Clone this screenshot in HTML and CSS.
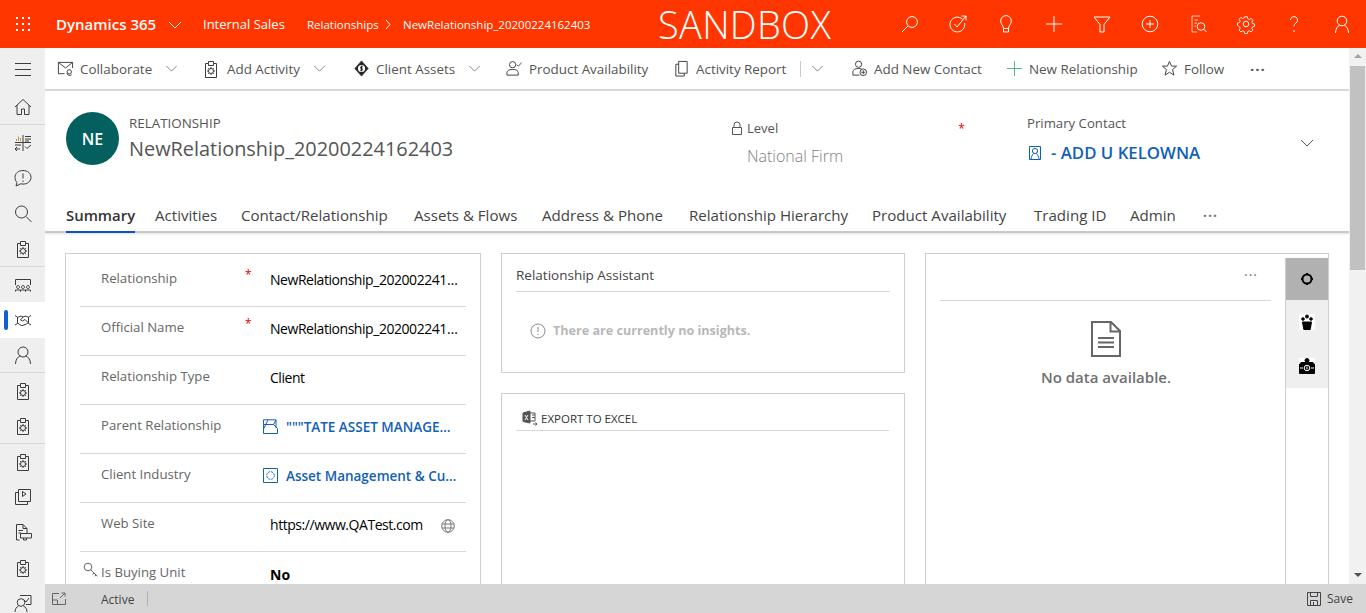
FILE: index.html
```html
<!DOCTYPE html>
<html lang="en">
<head>
    <meta charset="UTF-8">
    <meta name="viewport" content="width=device-width, initial-scale=1.0">
    <title>NewRelationship_20200224162403</title>
    <link rel="stylesheet" href="styles.css">
</head>
<body>
    <!-- Shared icon shapes -->
    <svg class="defs" width="0" height="0">
        <symbol id="clip" viewBox="0 0 20 20">
            <path d="M4.500 4.500h3v-2h5v2h3v14h-11z M7.500 4.500v2h5v-2"/>
            <circle cx="10" cy="12" r="2.500"/>
            <path d="M10 8v1.500M10 14.500V16M6 12h1.500M12.500 12H14M7.200 9.200l1 1M12.800 14.800l-1-1M12.800 9.200l-1 1M7.200 14.800l1-1"/>
        </symbol>
        <symbol id="chev" viewBox="0 0 14 8">
            <path d="M1 1l6 6 6-6"/>
        </symbol>
    </svg>

    <header class="topbar">
        <svg class="waffle" viewBox="0 0 14 14">
            <g fill="#fff">
                <rect x="0" y="0" width="2" height="2"/><rect x="6" y="0" width="2" height="2"/><rect x="12" y="0" width="2" height="2"/>
                <rect x="0" y="6" width="2" height="2"/><rect x="6" y="6" width="2" height="2"/><rect x="12" y="6" width="2" height="2"/>
                <rect x="0" y="12" width="2" height="2"/><rect x="6" y="12" width="2" height="2"/><rect x="12" y="12" width="2" height="2"/>
            </g>
        </svg>
        <span class="brand">Dynamics 365</span>
        <svg class="brand-chev"><use href="#chev"/></svg>
        <span class="app-name">Internal Sales</span>
        <span class="crumb">Relationships</span>
        <svg class="crumb-sep" viewBox="0 0 6 11"><path d="M1 1l4 4.500L1 10"/></svg>
        <span class="crumb crumb-last">NewRelationship_20200224162403</span>
        <span class="sandbox">SANDBOX</span>
        <div class="top-icons">
            <svg viewBox="0 0 20 20"><circle cx="12" cy="8" r="5.400"/><path d="M8 12l-6 6"/></svg>
            <svg viewBox="0 0 20 20"><path d="M14.500 5.200A7.400 7.400 0 1 0 16.600 9"/><path d="M6.500 10l2.500 3 9-11M13.500 2H18v4.500"/></svg>
            <svg viewBox="0 0 20 20"><path d="M7.500 14.500c0-3-2.800-4-2.800-7.600a5.300 5.300 0 0 1 10.600 0c0 3.600-2.800 4.600-2.800 7.600z M7.500 14.500V18h5v-3.500"/></svg>
            <svg viewBox="0 0 20 20"><path d="M10 2v16M2 10h16"/></svg>
            <svg viewBox="0 0 20 20"><path d="M2 3h16l-6 7.500V18H8v-7.500z"/></svg>
            <svg viewBox="0 0 20 20"><circle cx="10" cy="10" r="7.800"/><path d="M10 6v8M6 10h8"/></svg>
            <svg viewBox="0 0 20 20"><path class="faint" d="M12 2H4v16h5 M6.500 6H10M6.500 9H9M6.500 12H8"/><circle cx="13" cy="12.500" r="3.800"/><path d="M15.800 15.300L18.500 18"/></svg>
            <svg viewBox="0 0 20 20"><circle cx="10" cy="10" r="2.800"/><path d="M8.500 2h3l.5 2.300 1.700.7 2-1.200 2 2.100-1.200 2 .7 1.600 2.300.5v2.600l-2.300.5-.7 1.700 1.200 2-2 2-2-1.200-1.700.7-.5 2.300h-3l-.5-2.300-1.700-.7-2 1.200-2-2 1.200-2-.7-1.700L.5 11.500V8.900l2.300-.5.700-1.600-1.200-2 2-2.100 2 1.200 1.700-.7z" transform="translate(1 1) scale(.9)"/></svg>
            <svg viewBox="0 0 20 20"><path d="M6.500 6a3.500 3.500 0 1 1 5.500 3c-1.500 1-2 1.800-2 3.500M10 16v2"/></svg>
            <svg viewBox="0 0 20 20"><circle cx="10" cy="7" r="4.800"/><path d="M3.500 19c0-4 2.200-7 4-7.800M16.500 19c0-4-2.200-7-4-7.800"/></svg>
        </div>
    </header>

    <div class="shell">
        <nav class="sidebar">
            <div class="side-item side-burger">
                <svg viewBox="0 0 20 20"><path d="M2 4.500h16M2 10.500h16M2 16.500h16"/></svg>
            </div>
            <div class="side-item side-end">
                <svg viewBox="0 0 20 20"><path d="M2 10l8-7.500 8 7.500M4 8v9.500h4.500V12h3v5.500H16V8"/></svg>
            </div>
            <div class="side-item">
                <svg viewBox="0 0 20 20"><path class="warm" d="M3.500 8V6M5.500 8V3.500M7.500 8V5"/><path d="M2 9.500h16M10 2v16M12 3.500h6M12 6h6M12 8h4M2 12h6M4 18l-2-2 2-2M2 16h5M12 13.500l2 2 4-3.500"/></svg>
            </div>
            <div class="side-item">
                <svg viewBox="0 0 20 20"><path d="M10 2.500c4.600 0 8 2.900 8 6.800s-3.400 6.800-8 6.800c-.8 0-1.600-.1-2.300-.3L3 18l1-3.500C2.800 13.200 2 11.400 2 9.300c0-3.900 3.400-6.800 8-6.800z M10 5.500v5M10 12.500v1.500"/></svg>
            </div>
            <div class="side-item">
                <svg viewBox="0 0 20 20"><circle cx="8.500" cy="8" r="6"/><path d="M13 12.500l5.500 5.500"/></svg>
            </div>
            <div class="side-item side-end">
                <svg><use href="#clip"/></svg>
            </div>
            <div class="side-item">
                <svg viewBox="0 0 20 20"><path d="M2.500 10V4.500h15V10M5 10.500a1.500 1.500 0 1 0 .01 0M10 10.500a1.500 1.500 0 1 0 .01 0M15 10.500a1.500 1.500 0 1 0 .01 0M2.500 16.500v-1.500h5v1.500M7.500 16.500V15h5v1.500M12.500 16.500V15h5v1.500"/></svg>
            </div>
            <div class="side-item side-active">
                <svg viewBox="0 0 20 20"><path d="M2 5.500l2.500 1.500v6.500L2 15M18 5.500L15.500 7v6.500L18 15M4.500 7.500L8 6l2 1 3-1 2.500 1.500M4.500 13l3 2 1.500.7 4.500-1.700 2-1.500M10 7l-2.500 3 2 1 2.500-1.500 3.500 3.500"/></svg>
            </div>
            <div class="side-item side-end">
                <svg viewBox="0 0 20 20"><circle cx="10" cy="7" r="5"/><path d="M2.500 19c0-4.500 2.500-7.500 5-8.300M17.500 19c0-4.500-2.500-7.500-5-8.300"/></svg>
            </div>
            <div class="side-item"><svg><use href="#clip"/></svg></div>
            <div class="side-item side-end"><svg><use href="#clip"/></svg></div>
            <div class="side-item"><svg><use href="#clip"/></svg></div>
            <div class="side-item">
                <svg viewBox="0 0 20 20"><path d="M5.500 2.500h12v12h-12z M5.500 5.500h-3v12h12v-3M9.500 4.500l3.500 2.500-3.500 2.500z"/></svg>
            </div>
            <div class="side-item">
                <svg viewBox="0 0 20 20"><path d="M3.500 18V2.500h6.500l4 4v4.500M10 2.500v4h4M5.500 8.500H10M5.500 11H8M3.500 18h3M7.500 11.500h11V16h-11z M10.500 16v2h3v-2"/></svg>
            </div>
            <div class="side-item"><svg><use href="#clip"/></svg></div>
            <div class="side-item">
                <svg viewBox="0 0 20 20"><circle cx="8" cy="9.500" r="3.800"/><path d="M2 19c0-3 1.500-5 3.500-6M14 19c0-3-1.500-5-3.500-6M7 2.500h11v9h-5M11 7l2 2 3-4"/></svg>
            </div>
        </nav>

        <div class="main">
            <div class="main-top">
                <div class="content">
                    <div class="cmdbar">
                        <div class="cmd">
                            <svg viewBox="0 0 18 18"><path d="M8 14.500H1.500v-12h15v6M1.500 2.500l7.500 6 7.500-6"/><circle cx="13" cy="12.500" r="2.300"/><path d="M10.500 14a3 3 0 0 0 5 1.500"/></svg>
                            <span>Collaborate</span>
                            <svg class="chev"><use href="#chev"/></svg>
                        </div>
                        <div class="cmd">
                            <svg class="cmd-clip"><use href="#clip"/></svg>
                            <span>Add Activity</span>
                            <svg class="chev"><use href="#chev"/></svg>
                        </div>
                        <div class="cmd">
                            <svg viewBox="0 0 18 18"><path d="M9 1l7 8-7 8-7-8z" fill="#222"/><circle cx="9" cy="9" r="3.800" fill="#fff" stroke="none"/><path d="M10.500 7.200H8.200v1.800h1.600v1.800H7.500M9 6v6" stroke="#222"/></svg>
                            <span>Client Assets</span>
                            <svg class="chev"><use href="#chev"/></svg>
                        </div>
                        <div class="cmd">
                            <svg viewBox="0 0 18 18"><circle cx="7" cy="5" r="3.300"/><path d="M1 16v-2.500c0-2 2-3.500 6-3.500s6 1.500 6 3.500V16z M11.500 5l1.500 1.500L16.500 3"/></svg>
                            <span>Product Availability</span>
                        </div>
                        <div class="cmd">
                            <svg viewBox="0 0 18 18"><path d="M6 1.500h9v12.500H6z M6 4.500H3V17h9v-3"/></svg>
                            <span>Activity Report</span>
                            <i class="cmd-sep"></i>
                            <svg class="chev"><use href="#chev"/></svg>
                        </div>
                        <div class="cmd">
                            <svg viewBox="0 0 18 18"><circle cx="8" cy="4.500" r="3.300"/><path d="M9 16H2v-3.500C2 10.500 4 9 8 9c1.200 0 2.300.1 3.200.5"/><circle cx="13" cy="13" r="3.500"/><path d="M13 11v4M11 13h4"/></svg>
                            <span>Add New Contact</span>
                        </div>
                        <div class="cmd">
                            <svg viewBox="0 0 18 18"><path class="green" d="M9 1v16M1 9h16"/></svg>
                            <span>New Relationship</span>
                        </div>
                        <div class="cmd">
                            <svg viewBox="0 0 18 18"><path d="M9 1.500l2.200 5h5.300l-4.300 3.700 1.500 5.800L9 13l-4.700 3 1.500-5.800L1.500 6.500h5.300z"/></svg>
                            <span>Follow</span>
                        </div>
                        <div class="cmd cmd-more">&middot;&middot;&middot;</div>
                    </div>

                    <div class="record">
                        <div class="avatar">NE</div>
                        <div class="record-title">
                            <div class="entity">RELATIONSHIP</div>
                            <h1>NewRelationship_20200224162403</h1>
                        </div>
                        <div class="level">
                            <div class="level-label">
                                <svg viewBox="0 0 12 14"><path d="M1.500 6.500h9v7h-9z M3 6.500V4a3 3 0 0 1 6 0v2.500"/></svg>
                                <span>Level</span>
                                <b class="star">*</b>
                            </div>
                            <div class="level-value">National Firm</div>
                        </div>
                        <div class="contact">
                            <div class="contact-label">Primary Contact</div>
                            <div class="contact-value">
                                <svg viewBox="0 0 16 16"><path d="M2.500 1.500h11v13h-11z"/><circle cx="8" cy="6" r="2.600"/><path d="M4 14.500c0-3 1.500-4.500 2.500-6M12 14.500c0-3-1.500-4.500-2.500-6"/></svg>
                                <a>- ADD U KELOWNA</a>
                            </div>
                        </div>
                        <svg class="record-chev"><use href="#chev"/></svg>
                    </div>

                    <div class="tabs">
                        <span class="tab tab-on">Summary</span>
                        <span class="tab">Activities</span>
                        <span class="tab">Contact/Relationship</span>
                        <span class="tab">Assets &amp; Flows</span>
                        <span class="tab">Address &amp; Phone</span>
                        <span class="tab">Relationship Hierarchy</span>
                        <span class="tab">Product Availability</span>
                        <span class="tab">Trading ID</span>
                        <span class="tab">Admin</span>
                        <span class="tab tab-more">&middot;&middot;&middot;</span>
                    </div>

                    <div class="columns">
                        <section class="card card-fields">
                            <div class="row">
                                <label>Relationship</label><b class="star">*</b>
                                <div class="val">NewRelationship_20200224162403</div>
                            </div>
                            <div class="row">
                                <label>Official Name</label><b class="star">*</b>
                                <div class="val">NewRelationship_20200224162403</div>
                            </div>
                            <div class="row">
                                <label>Relationship Type</label>
                                <div class="val">Client</div>
                            </div>
                            <div class="row row-link">
                                <label>Parent Relationship</label>
                                <svg viewBox="0 0 15 15"><path d="M.5 5.500h10l4 4v5H.5z M.5 5.500V.8h12.500v8 M.5 10L5 1M10.500 5.500L13 1"/></svg>
                                <a class="val">"""TATE ASSET MANAGEMENT INC.</a>
                            </div>
                            <div class="row row-link">
                                <label>Client Industry</label>
                                <svg viewBox="0 0 15 15"><path d="M.5.5h14v14H.5z"/><circle cx="7.500" cy="7.500" r="3.800" stroke-dasharray="2 1"/></svg>
                                <a class="val">Asset Management &amp; Custody Banks</a>
                            </div>
                            <div class="row row-web">
                                <label>Web Site</label>
                                <div class="val">https://www.QATest.com</div>
                                <svg viewBox="0 0 14 14"><circle cx="7" cy="7" r="6.300"/><ellipse cx="7" cy="7" rx="3" ry="6.300"/><path d="M1 5h12M1 9h12"/></svg>
                            </div>
                            <div class="row row-key">
                                <svg viewBox="0 0 16 16"><circle cx="5" cy="5" r="3.800"/><path d="M7.800 7.800l6.500 6.500M11 11l-1.500 1.500M13 13l-1.300 1.300"/></svg>
                                <label>Is Buying Unit</label>
                                <div class="val val-strong">No</div>
                            </div>
                        </section>

                        <div class="stack">
                            <section class="card card-assistant">
                                <h2>Relationship Assistant</h2>
                                <div class="insight">
                                    <svg viewBox="0 0 16 16"><circle cx="8" cy="8" r="7"/><path d="M8 4v5M8 10.800v1.200"/></svg>
                                    <span>There are currently no insights.</span>
                                </div>
                            </section>
                            <section class="card card-export">
                                <div class="export">
                                    <svg viewBox="0 0 16 16"><path class="solid" d="M1 3l7-2v12l-7-1.500z"/><path class="cross" d="M3 5l3 5M6 5l-3 5"/><path d="M8 3h5v8H8M10 5h3M10 7.500h3M11 14h4M13.500 12.500L15 14l-1.500 1.500"/></svg>
                                    <span>EXPORT TO EXCEL</span>
                                </div>
                            </section>
                        </div>

                        <section class="card card-side">
                            <div class="side-body">
                                <div class="side-head">&middot;&middot;&middot;</div>
                                <div class="empty">
                                    <svg viewBox="0 0 30 36"><path d="M1 1h19l9 9v25H1z M19.500 1v9.500H29M7 17h16M7 21.500h16M7 26h16"/></svg>
                                    <p>No data available.</p>
                                </div>
                            </div>
                            <div class="side-tabs">
                                <div class="side-tab side-tab-on">
                                    <svg viewBox="0 0 16 16"><circle cx="8" cy="8" r="4.500"/><path d="M8 2v1.500M8 12.500V14M2 8h1.500M12.500 8H14"/></svg>
                                </div>
                                <div class="side-tab">
                                    <svg viewBox="0 0 16 16"><rect class="paper" width="16" height="16"/><path class="solid" d="M3.500 8h9l-1.300 7.500H4.800z"/><circle class="solid" cx="8" cy="2.500" r="1.500"/><circle class="solid" cx="4" cy="5" r="1.300"/><circle class="solid" cx="12" cy="5" r="1.300"/></svg>
                                </div>
                                <div class="side-tab">
                                    <svg viewBox="0 0 16 16"><rect class="paper" width="16" height="16"/><path class="solid" d="M2 4.500h12l1.500 2v9H.5v-9z"/><circle class="solid" cx="8" cy="2.500" r="2"/><circle cx="8" cy="10" r="2.800" class="hole"/><path class="hole" d="M8 8.500v3M1 10h3M12 10h3"/></svg>
                                </div>
                            </div>
                        </section>
                    </div>
                </div>

                <div class="scrollbar">
                    <i class="arrow-up"></i>
                    <div class="thumb"></div>
                    <i class="arrow-down"></i>
                </div>
            </div>

            <footer class="status">
                <svg viewBox="0 0 14 14"><path d="M7 1.500H.5v11h13V7M.5 8h5v4.500M8 6l5-5M9.500 1H13v3.500"/></svg>
                <span class="status-text">Active</span>
                <i class="status-sep"></i>
                <div class="save">
                    <svg viewBox="0 0 14 14"><path d="M.5.5h13v13H.5z M3.500.5v4h7v-4M3.500 13.500V8.500h7v5M6.500 10v3.500"/></svg>
                    <span>Save</span>
                </div>
            </footer>
        </div>
    </div>
</body>
</html>
```
FILE: styles.css
```css
/* General */
* {
    box-sizing: border-box;
}

html, body {
    height: 100%;
    margin: 0;
    overflow: hidden;
}

body {
    display: flex;
    flex-direction: column;
    font-family: "Open Sans", "Noto Sans", sans-serif;
    font-size: 13px;
    color: #444;
    background-color: #fff;
}

svg {
    display: block;
    flex: none;
    fill: none;
    stroke: #3c3c3c;
    stroke-width: 1;
}

.defs {
    position: absolute;
}

.star {
    color: #e00000;
    font-weight: 400;
    font-size: 12px;
}

/* Top bar */
.topbar {
    display: flex;
    align-items: center;
    flex: none;
    height: 48px;
    padding-left: 16px;
    background-color: #ff3600;
    color: #fff;
}

.topbar svg {
    stroke: #fff;
}

.waffle {
    width: 14px;
    height: 14px;
}

.topbar .waffle {
    stroke: none;
}

.brand {
    margin-left: 26px;
    width: 112px;
    font-size: 15px;
    font-weight: 600;
    white-space: nowrap;
}

.brand-chev {
    width: 14px;
    height: 8px;
    margin-top: 2px;
}

.app-name {
    margin-left: 21px;
    width: 104px;
    font-size: 13px;
    font-weight: 500;
    white-space: nowrap;
}

.crumb {
    width: 71px;
    font-size: 11.5px;
    white-space: nowrap;
}

.crumb-sep {
    width: 6px;
    height: 11px;
    margin: 0 12px 0 7px;
}

.crumb-last {
    width: 255px;
}

.sandbox {
    font-size: 38px;
    font-weight: 300;
    letter-spacing: .3px;
    white-space: nowrap;
}

.top-icons {
    display: grid;
    grid-template-columns: repeat(10, 48px);
    justify-items: center;
    margin-left: auto;
}

.top-icons svg {
    width: 20px;
    height: 20px;
}

.top-icons .faint {
    opacity: .75;
}

/* Left navigation */
.shell {
    display: flex;
    flex: 1;
    min-height: 0;
}

.sidebar {
    flex: none;
    width: 45px;
    overflow: hidden;
    background-color: #efefef;
}

.side-item {
    display: flex;
    align-items: center;
    justify-content: center;
    height: 35.4px;
}

.side-item svg {
    width: 20px;
    height: 20px;
}

.side-item .warm {
    stroke: #c98a4a;
}

.side-burger {
    height: 42px;
}

.side-end {
    border-bottom: 1px solid #d8d8d8;
}

.side-active {
    position: relative;
    background-color: #fff;
}

.side-active::before {
    content: "";
    position: absolute;
    left: 4px;
    top: 8px;
    width: 4px;
    height: 20px;
    border-radius: 2px;
    background-color: #0f5fd6;
}

/* Main area */
.main {
    display: flex;
    flex-direction: column;
    flex: 1;
    min-width: 0;
}

.main-top {
    display: flex;
    flex: 1;
    min-height: 0;
}

.content {
    flex: 1;
    min-width: 0;
    overflow: hidden;
}

/* Command bar */
.cmdbar {
    display: grid;
    grid-template-columns: 147px 149px 153px 167px 178px 155px 155px 89px 40px;
    align-items: center;
    height: 43px;
    padding-left: 12px;
    border-bottom: 2px solid #d8d8d8;
}

.cmd {
    display: flex;
    align-items: center;
    font-size: 13.4px;
    color: #555;
    white-space: nowrap;
}

.cmd svg {
    width: 17px;
    height: 17px;
}

.cmd .cmd-clip {
    width: 20px;
    height: 20px;
    margin-left: -3px;
}

.cmd span {
    margin-left: 6px;
}

.cmd .chev {
    width: 13px;
    height: 7px;
    margin-left: 13px;
}

.chev {
    stroke: #777;
}

.cmd .green {
    stroke: #49b57c;
}

.cmd-sep {
    width: 1px;
    height: 16px;
    margin-left: 14px;
    background-color: #c8c8c8;
}

.cmd .cmd-sep + .chev {
    margin-left: 10px;
}

.cmd-more {
    font-size: 15px;
    font-weight: 700;
    letter-spacing: 1px;
}

/* Record header */
.record {
    display: flex;
    height: 109px;
    padding: 21px 0 0 21px;
}

.avatar {
    display: flex;
    align-items: center;
    justify-content: center;
    flex: none;
    width: 53px;
    height: 53px;
    border-radius: 50%;
    background-color: #03605f;
    color: #fff;
    font-size: 16px;
    font-weight: 600;
}

.record-title {
    width: 612px;
    padding: 2px 0 0 10px;
}

.entity {
    font-size: 13.4px;
    line-height: 18px;
    color: #555;
}

h1 {
    margin: 3px 0 0;
    font-size: 19.9px;
    font-weight: 400;
    line-height: 27px;
    color: #555;
    white-space: nowrap;
}

.level {
    width: 296px;
}

.level-label {
    display: flex;
    align-items: center;
    height: 32px;
    font-size: 13px;
    color: #555;
}

.level-label svg {
    width: 12px;
    height: 14px;
    margin-right: 4px;
    stroke: #555;
}

.level-label .star {
    margin-left: 180px;
}

.level-value {
    margin-top: 1px;
    padding-left: 16px;
    font-size: 16px;
    font-weight: 300;
    color: #808080;
}

.contact {
    width: 273px;
}

.contact-label {
    padding-top: 1px;
    font-size: 13.2px;
    line-height: 21px;
    color: #555;
}

.contact-value {
    display: flex;
    align-items: center;
    margin-top: 7px;
    font-size: 16.8px;
    font-weight: 600;
    color: #1160b7;
}

.contact-value svg {
    width: 16px;
    height: 16px;
    margin-right: 8px;
    stroke: #1160b7;
}

.record-chev {
    width: 14px;
    height: 8px;
    margin-top: 27px;
    stroke: #555;
}

/* Tabs */
.tabs {
    display: grid;
    grid-template-columns: 89px 86px 173px 128px 147px 183px 162px 96px 73px 30px;
    height: 33px;
    padding-left: 21px;
    border-bottom: 2px solid #c8c8c8;
    box-shadow: 0 1px 2px rgba(0, 0, 0, .12);
}

.tab {
    height: 33px;
    font-size: 15.1px;
    line-height: 31px;
    color: #444;
    white-space: nowrap;
}

.tab-on {
    width: 69px;
    border-bottom: 2px solid #0b53ce;
    font-size: 14.9px;
    font-weight: 600;
    color: #333;
}

.tab-more {
    font-size: 14px;
    font-weight: 700;
    color: #777;
    letter-spacing: 1px;
}

/* Cards */
.columns {
    display: grid;
    grid-template-columns: 416px 404px 404px;
    gap: 20px;
    height: 400px;
    padding: 20px 0 0 20px;
}

.card {
    border: 1px solid #cfcfcf;
    background-color: #fff;
}

.card-fields {
    height: 360px;
    padding: 4px 14px 0;
}

.row {
    display: flex;
    height: 49px;
    padding: 0 0 0 21px;
    border-bottom: 1px solid #d8d8d8;
}

.row label {
    width: 144px;
    padding-top: 10px;
    line-height: 20px;
    font-size: 13.2px;
    color: #666;
    white-space: nowrap;
}

.row .star {
    width: 25px;
    margin-top: 8px;
}

.row .val {
    min-width: 0;
    padding-top: 12px;
    line-height: 20px;
    font-size: 14px;
    font-weight: 500;
    letter-spacing: -.45px;
    color: #000;
    overflow: hidden;
    text-overflow: ellipsis;
    white-space: nowrap;
}

.row > label:first-child + .val {
    margin-left: 25px;
}

.row > .star + .val {
    width: 189px;
}

.row-link svg {
    width: 15px;
    height: 15px;
    margin: 14px 8px 0 18px;
    stroke: #1160b7;
}

.row-link .val {
    width: 171px;
    font-size: 13.5px;
    font-weight: 600;
    letter-spacing: 0;
    color: #1160b7;
}

.row-web svg {
    width: 14px;
    height: 14px;
    margin: 16px 0 0 18px;
    stroke: #777;
}

.row-key {
    position: relative;
    border-bottom: none;
}

.row-key svg {
    position: absolute;
    left: 3px;
    top: 10px;
    width: 16px;
    height: 16px;
    stroke: #666;
}

.row .val-strong {
    margin-left: 25px;
    padding-top: 13px;
    font-weight: 700;
    letter-spacing: 0;
}

.stack {
    display: flex;
    flex-direction: column;
    gap: 20px;
}

.card-assistant {
    height: 120px;
    padding: 0 14px;
}

h2 {
    margin: 0;
    height: 38px;
    border-bottom: 1px solid #d8d8d8;
    font-size: 13.5px;
    font-weight: 500;
    line-height: 42px;
    color: #444;
}

.insight {
    display: flex;
    align-items: center;
    margin-top: 30px;
    padding-left: 14px;
    font-size: 12.6px;
    font-weight: 700;
    color: #b8b8b8;
}

.insight svg {
    width: 16px;
    height: 16px;
    margin-right: 7px;
    stroke: #8a8a8a;
}

.card-export {
    height: 300px;
    padding: 0 15px 0 14px;
}

.export {
    display: flex;
    align-items: center;
    height: 37px;
    padding: 12px 0 0 6px;
    border-bottom: 1px solid #d8d8d8;
    font-size: 11.5px;
    color: #333;
}

.export svg {
    width: 16px;
    height: 16px;
    margin-right: 3px;
    stroke: #555;
}

.export .solid {
    fill: #555;
}

.export .cross {
    stroke: #fff;
}

.card-side {
    display: flex;
    height: 360px;
    padding: 4px 0 0 14px;
}

.side-body {
    flex: 1;
}

.side-head {
    height: 43px;
    margin-right: 14px;
    padding-right: 13px;
    border-bottom: 1px solid #d8d8d8;
    font-size: 14px;
    font-weight: 400;
    line-height: 34px;
    letter-spacing: 1px;
    text-align: right;
    color: #777;
}

.empty {
    padding: 20px 13px 0 0;
    text-align: center;
}

.empty svg {
    width: 30px;
    height: 36px;
    margin: 0 auto;
    stroke: #666;
    stroke-width: 2;
}

.empty p {
    margin: 10px 0 0;
    font-size: 15px;
    font-weight: 600;
    color: #707070;
}

.side-tabs {
    flex: none;
    width: 43px;
    border-left: 1px solid #cfcfcf;
}

.side-tab {
    display: flex;
    align-items: center;
    justify-content: center;
    height: 44px;
    background-color: #efefef;
}

.side-tab svg {
    width: 16px;
    height: 16px;
    stroke: #000;
}

.side-tab .solid {
    fill: #000;
}

.side-tab .paper {
    fill: #fff;
    stroke: none;
}

.side-tab .hole {
    fill: none;
    stroke: #fff;
}

.side-tab-on {
    height: 42px;
    background-color: #b1b1b1;
}

.side-tab-on svg {
    stroke-width: 2;
}

/* Scrollbar */
.scrollbar {
    display: flex;
    flex-direction: column;
    align-items: center;
    flex: none;
    width: 17px;
    background-color: #f1f1f1;
}

.thumb {
    width: 15px;
    height: 204px;
    margin-top: 8px;
    background-color: #c1c1c1;
}

.arrow-up,
.arrow-down {
    width: 0;
    height: 0;
    border-left: 4px solid transparent;
    border-right: 4px solid transparent;
}

.arrow-up {
    margin-top: 6px;
    border-bottom: 4px solid #a3a3a3;
}

.arrow-down {
    margin-top: auto;
    margin-bottom: 7px;
    border-top: 4px solid #505050;
}

/* Status bar */
.status {
    display: flex;
    align-items: center;
    flex: none;
    height: 29px;
    padding: 0 13px 0 7px;
    background-color: #d6d6d6;
    font-size: 12px;
    color: #444;
}

.status > svg {
    width: 14px;
    height: 14px;
    stroke: #666;
}

.status-text {
    margin-left: 35px;
    padding-top: 1px;
}

.status-sep {
    width: 1px;
    height: 15px;
    margin-left: 13px;
    background-color: #b0b0b0;
}

.save {
    display: flex;
    align-items: center;
    margin-left: auto;
}

.save svg {
    width: 14px;
    height: 14px;
    margin-right: 6px;
    stroke: #444;
}
```
